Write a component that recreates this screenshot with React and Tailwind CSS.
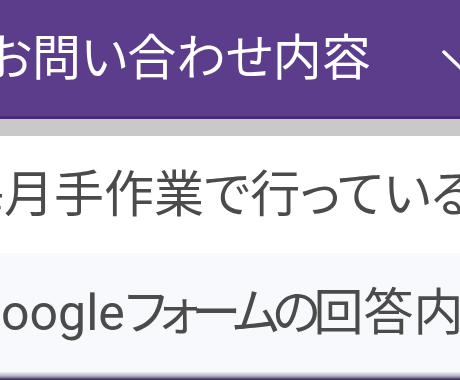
export default function App() {
  return (
    <div className="w-[460px] h-[380px] overflow-hidden bg-white font-['Roboto','Noto_Sans_CJK_JP',sans-serif] [font-feature-settings:'palt']">
      {/* Accordion header */}
      <div className="h-[119px] bg-[#5c3d8b] border-b-[3px] border-[#48297a] flex items-center">
        <span className="ml-[-15px] text-[49px] leading-none text-white whitespace-nowrap">
          お問い合わせ内容
        </span>
        <svg
          className="ml-auto mr-[-34px] mt-[12px] shrink-0"
          width="52"
          height="28"
          viewBox="0 0 52 28"
          fill="none"
          stroke="white"
          strokeWidth="3.5"
          strokeLinecap="round"
          strokeLinejoin="round"
        >
          <polyline points="2,2 26,25 50,2" />
        </svg>
      </div>
      <div className="h-[17px] bg-[#c9c9c9]" />

      {/* Rows */}
      <div className="h-[117px] bg-white flex items-center">
        <span className="ml-[-46px] text-[50px] leading-none text-[#4b4b4b] whitespace-nowrap">
          毎月手作業で行っている業務
        </span>
      </div>
      <div className="h-[119px] bg-[#f8f9fc] flex items-center">
        <span className="ml-[-33px] text-[50px] leading-none text-[#4b4b4b] whitespace-nowrap">
          Google<span className="tracking-[-7px]">フォームの</span>回答内容
        </span>
      </div>
      <div className="h-[8px] bg-gradient-to-b from-[#eeecf1] via-[#b9b4c4] to-[#2e1a55]" />
    </div>
  );
}
